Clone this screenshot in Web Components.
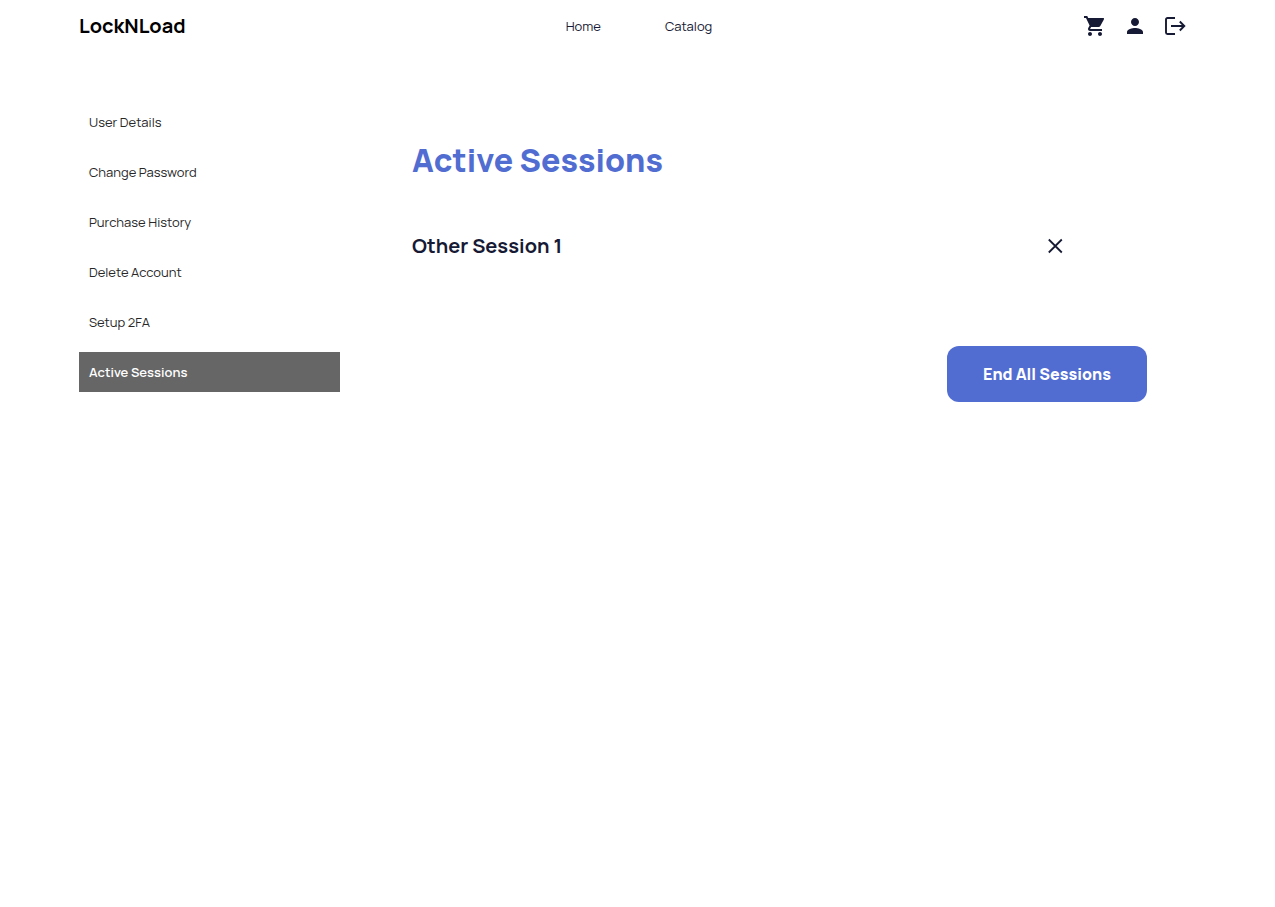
<!DOCTYPE html>
<html lang="en">
<head>
<meta charset="utf-8">
<meta name="viewport" content="width=device-width, initial-scale=1">
<title>LockNLoad - Active Sessions</title>
<style>
body { margin: 0; background: #fff; color: #161a34; font-family: Manrope, Inter, "Open Sans", sans-serif; font-size: 13px; line-height: 20px; }
</style>
</head>
<body>
<account-page></account-page>
<script>
const define = (name, html) => customElements.define(name, class extends HTMLElement {
  constructor() {
    super();
    const t = document.createElement('template');
    t.innerHTML = html;
    this.attachShadow({ mode: 'open' }).append(t.content.cloneNode(true));
  }
});

const icons = {
  cart: '<path d="M7 18c-1.100 0-1.990.9-1.990 2S5.900 22 7 22s2-.9 2-2-.9-2-2-2zM1 2v2h2l3.600 7.590-1.350 2.450c-.16.28-.25.61-.25.960 0 1.100.9 2 2 2h12v-2H7.420c-.14 0-.25-.11-.25-.25l.03-.12.9-1.630h7.450c.75 0 1.410-.41 1.750-1.030l3.580-6.490A1 1 0 0 0 20 4H5.210l-.94-2H1zm16 16c-1.100 0-1.990.9-1.990 2s.89 2 1.990 2 2-.9 2-2-.9-2-2-2z"/>',
  person: '<path d="M12 12c2.210 0 4-1.790 4-4s-1.790-4-4-4-4 1.790-4 4 1.790 4 4 4zm0 2c-2.670 0-8 1.340-8 4v2h16v-2c0-2.660-5.330-4-8-4z"/>',
  logout: '<path d="M12 4H4.500A1.500 1.500 0 0 0 3 5.500v13A1.500 1.500 0 0 0 4.500 20H12M8 12h13M16.800 7.500 21.300 12l-4.500 4.500" fill="none" stroke="currentColor" stroke-width="1.900"/>',
  close: '<path d="M5.800 5.500l13 13M18.800 5.500l-13 13" fill="none" stroke="currentColor" stroke-width="1.800"/>'
};
customElements.define('line-icon', class extends HTMLElement {
  constructor() { super(); this.attachShadow({ mode: 'open' }); }
  connectedCallback() {
    this.shadowRoot.innerHTML = `<style>:host{display:block;width:24px;height:24px}svg{display:block;width:100%;height:100%;fill:currentColor}</style>
      <svg viewBox="0 0 24 24" aria-hidden="true">${icons[this.getAttribute('name')]}</svg>`;
  }
});

define('site-header', `
<style>
:host { display: grid; grid-template-columns: 1fr auto 1fr; align-items: center; height: 52px; padding: 0 88px 0 79px; }
a { color: inherit; text-decoration: none; }
.brand { color: #000; font-size: 20px; font-weight: 700; }
nav { display: flex; gap: 64px; padding-left: 12px; }
.icons { display: flex; justify-content: flex-end; gap: 16px; }
button { display: block; margin: 0; padding: 0; border: 0; background: none; color: inherit; cursor: pointer; }
</style>
<a class="brand" href="#home">LockNLoad</a>
<nav aria-label="Main"><a href="#home">Home</a><a href="#catalog">Catalog</a></nav>
<div class="icons">
  <a href="#cart" aria-label="Cart"><line-icon name="cart"></line-icon></a>
  <a href="#account" aria-label="Account"><line-icon name="person"></line-icon></a>
  <button type="button" aria-label="Log out"><line-icon name="logout"></line-icon></button>
</div>`);

customElements.define('menu-link', class extends HTMLElement {
  constructor() { super(); this.attachShadow({ mode: 'open' }); }
  connectedCallback() {
    const current = this.hasAttribute('active') ? 'aria-current="page"' : '';
    this.shadowRoot.innerHTML = `<style>
      :host { display: block; }
      a { display: block; padding: 10px; color: #272727; text-decoration: none; }
      a[aria-current] { background: #666; color: #fff; font-weight: 600; }
    </style><a href="${this.getAttribute('href')}" ${current}><slot></slot></a>`;
  }
});

define('account-menu', `
<style>:host { display: block; } nav { display: grid; gap: 10px; }</style>
<nav aria-label="Account"><slot></slot></nav>`);

define('session-row', `
<style>
:host { display: flex; align-items: center; justify-content: space-between; padding-right: 80px; }
h2 { margin: 0; font-size: 20px; line-height: 24px; font-weight: 700; }
button { display: block; margin: 0; padding: 0; border: 0; background: none; color: inherit; cursor: pointer; }
</style>
<h2><slot></slot></h2>
<button type="button" aria-label="End session"><line-icon name="close"></line-icon></button>`);

define('session-panel', `
<style>
:host { display: flex; flex-direction: column; padding-top: 36px; }
h1 { margin: 0 0 52px; color: #516dd1; font-size: 32px; line-height: 44px; font-weight: 800; }
button { align-self: flex-end; width: 200px; height: 56px; margin: 88px 0 0; padding: 0; border: 0; border-radius: 12px; background: #516dd1; color: #fff; font: inherit; font-size: 16px; font-weight: 800; cursor: pointer; }
</style>
<h1>Active Sessions</h1>
<slot></slot>
<button type="button">End All Sessions</button>`);

define('account-page', `
<style>
:host { display: block; }
main { display: grid; grid-template-columns: 261px 1fr; gap: 72px; align-items: start; padding: 50px 128px 48px 79px; }
</style>
<site-header></site-header>
<main>
  <account-menu>
    <menu-link href="#details">User Details</menu-link>
    <menu-link href="#password">Change Password</menu-link>
    <menu-link href="#history">Purchase History</menu-link>
    <menu-link href="#delete">Delete Account</menu-link>
    <menu-link href="#2fa">Setup 2FA</menu-link>
    <menu-link href="#sessions" active>Active Sessions</menu-link>
  </account-menu>
  <session-panel><session-row>Other Session 1</session-row></session-panel>
</main>`);
</script>
</body>
</html>
